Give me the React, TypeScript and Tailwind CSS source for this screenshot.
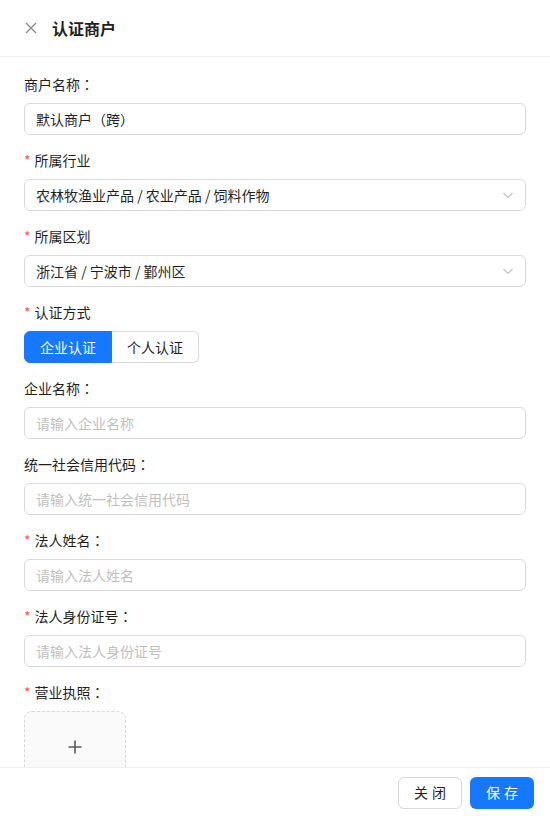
import React from "react";

const FONT = '"Noto Sans CJK SC", "Noto Sans", "Liberation Sans", sans-serif';
const PUNCT = '"Noto Sans CJK TC", "Noto Sans CJK SC", sans-serif';

function Label({ text, required }: { text: string; required?: boolean }) {
  const hasColon = text.endsWith("：");
  const main = hasColon ? text.slice(0, -1) : text;
  return (
    <div className="flex items-center h-[22px] mb-2 text-[14px] leading-[22px] text-[#1f1f1f]">
      {required && <span className="text-[#ff4d4f] mr-1 text-[14px] leading-none">*</span>}
      <span>
        {main}
        {hasColon && <span style={{ fontFamily: PUNCT }}>：</span>}
      </span>
    </div>
  );
}

function Input({ value, placeholder }: { value?: React.ReactNode; placeholder?: string }) {
  return (
    <div className="h-8 w-full rounded-md border border-[#d9d9d9] bg-white px-[11px] flex items-center text-[14px]">
      {value ? <span className="text-[#1f1f1f]">{value}</span> : <span className="text-[#bfbfbf]">{placeholder}</span>}
    </div>
  );
}

function Select({ value }: { value: string }) {
  return (
    <div className="h-8 w-full rounded-md border border-[#d9d9d9] bg-white pl-[11px] pr-[11px] flex items-center justify-between text-[14px]">
      <span className="text-[#1f1f1f]">{value}</span>
      <svg width="12" height="12" viewBox="0 0 12 12" fill="none">
        <path d="M1.5 4 L6 8.5 L10.5 4" stroke="#bfbfbf" strokeWidth="1.1" />
      </svg>
    </div>
  );
}

function Field({ children }: { children: React.ReactNode }) {
  return <div className="mb-[14px]">{children}</div>;
}

export default function App() {
  return (
    <div className="w-[550px] h-[816px] flex flex-col bg-white overflow-hidden" style={{ fontFamily: FONT }}>
      <div className="h-[57px] shrink-0 flex items-center px-6 border-b border-[#f0f0f0]">
        <svg width="14" height="14" viewBox="0 0 14 14" className="mr-[14px]">
          <path d="M2 2 L12 12 M12 2 L2 12" stroke="#8c8c8c" strokeWidth="1.4" />
        </svg>
        <span className="text-[16px] font-bold text-[#1f1f1f] leading-6">认证商户</span>
      </div>
      <div className="flex-1 overflow-hidden px-6 pt-4">
        <Field>
          <Label text="商户名称：" />
          <Input
            value={
              <>
                默认商户<span style={{ fontFamily: PUNCT }}>（</span>跨<span style={{ fontFamily: PUNCT }}>）</span>
              </>
            }
          />
        </Field>
        <Field>
          <Label text="所属行业" required />
          <Select value="农林牧渔业产品 / 农业产品 / 饲料作物" />
        </Field>
        <Field>
          <Label text="所属区划" required />
          <Select value="浙江省 / 宁波市 / 鄞州区" />
        </Field>
        <Field>
          <Label text="认证方式" required />
          <div className="flex h-8 text-[14px]">
            <div className="h-8 px-[15px] flex items-center bg-[#1677ff] text-white rounded-l-md border border-[#1677ff]">企业认证</div>
            <div className="h-8 px-[15px] flex items-center bg-white text-[#1f1f1f] rounded-r-md border border-l-0 border-[#d9d9d9]">个人认证</div>
          </div>
        </Field>
        <Field>
          <Label text="企业名称：" />
          <Input placeholder="请输入企业名称" />
        </Field>
        <Field>
          <Label text="统一社会信用代码：" />
          <Input placeholder="请输入统一社会信用代码" />
        </Field>
        <Field>
          <Label text="法人姓名：" required />
          <Input placeholder="请输入法人姓名" />
        </Field>
        <Field>
          <Label text="法人身份证号：" required />
          <Input placeholder="请输入法人身份证号" />
        </Field>
        <Field>
          <Label text="营业执照：" required />
          <div className="w-[102px] h-[102px] rounded-lg border border-dashed border-[#d9d9d9] bg-[#fafafa] flex flex-col items-center pt-[28px]">
            <svg width="14" height="14" viewBox="0 0 14 14">
              <path d="M7 0.5 V13.5 M0.5 7 H13.5" stroke="#595959" strokeWidth="1.6" />
            </svg>
          </div>
        </Field>
      </div>
      <div className="h-[49px] shrink-0 border-t border-[#f0f0f0] flex items-center justify-end gap-2 pr-4 pt-[1px]">
        <button className="h-8 w-16 rounded-md border border-[#d9d9d9] bg-white text-[14px] text-[#1f1f1f] tracking-[4px] pl-1">关闭</button>
        <button className="h-8 w-16 rounded-md bg-[#1677ff] text-[14px] text-white tracking-[4px] pl-1">保存</button>
      </div>
    </div>
  );
}
